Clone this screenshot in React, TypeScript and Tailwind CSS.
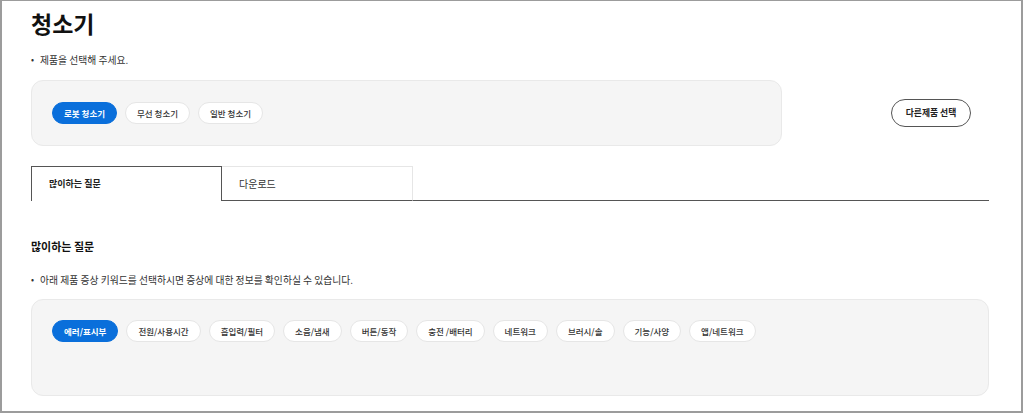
import React from "react";

const products = ["로봇 청소기", "무선 청소기", "일반 청소기"];
const keywords = [
  "에러/표시부",
  "전원/사용시간",
  "흡입력/필터",
  "소음/냄새",
  "버튼/동작",
  "충전 /배터리",
  "네트워크",
  "브러시/솔",
  "기능/사양",
  "앱/네트워크",
];

function Chip({ label, active }: { label: string; active?: boolean }) {
  return (
    <button
      className={
        active
          ? "h-[22px] px-[11px] rounded-full bg-[#0a6fdb] border border-[#0a6fdb] text-white text-[8.5px] font-bold leading-none whitespace-nowrap"
          : "h-[22px] px-[11px] rounded-full bg-white border border-[#e6e6e6] text-[#333] text-[8.5px] font-medium leading-none whitespace-nowrap"
      }
    >
      {label}
    </button>
  );
}

function Bullet({ children }: { children: React.ReactNode }) {
  return (
    <p className="flex items-center leading-[14px] text-[#333] text-[9.8px]">
      <span className="w-[9px] text-[9px]">•</span>
      <span>{children}</span>
    </p>
  );
}

export default function App() {
  return (
    <div
      className="w-[1023px] h-[413px] bg-white border-2 border-t border-[#9c9c9c] overflow-hidden"
      style={{ fontFamily: "'Noto Sans CJK KR', 'Noto Sans', sans-serif" }}
    >
      <div className="pt-[6px] pl-[29px] pr-[32px]">
        <h1 className="text-[23px] leading-[32px] font-bold text-[#111]">청소기</h1>

        <div className="mt-[14px]">
          <Bullet>제품을 선택해 주세요.</Bullet>
        </div>

        {/* product picker */}
        <div className="mt-[13px] flex items-center">
          <div className="w-[751px] h-[66px] rounded-[12px] bg-[#f5f5f5] border border-[#e9e9e9] flex items-center gap-[8px] px-[20px]">
            {products.map((p, i) => (
              <Chip key={p} label={p} active={i === 0} />
            ))}
          </div>
          <button className="ml-auto mr-[18px] h-[28px] w-[80px] rounded-full border border-[#555] bg-white text-[8.8px] font-bold text-[#222] leading-none">
            다른제품 선택
          </button>
        </div>

        {/* tabs */}
        <div className="mt-[20px] flex h-[35px]">
          <div className="w-[191px] h-[35px] border-t border-l border-r border-[#555] flex items-center pl-[17px] text-[9px] font-bold text-[#222]">
            많이하는 질문
          </div>
          <div className="w-[191px] h-[35px] border-t border-r border-t-[#e6e6e6] border-r-[#e6e6e6] border-b border-b-[#555] flex items-center pl-[17px] text-[10px] text-[#333]">
            다운로드
          </div>
          <div className="flex-1 border-b border-[#555]" />
        </div>

        <h2 className="mt-[37px] text-[11px] leading-[16px] font-bold text-[#111]">많이하는 질문</h2>

        <div className="mt-[19px]">
          <Bullet>
            아래 제품 증상 키워드를 선택하시면 증상에 대한 정보를 확인하실 수 있습니다.
          </Bullet>
        </div>

        {/* symptom keywords */}
        <div className="mt-[12px] h-[97px] rounded-[12px] bg-[#f5f5f5] border border-[#e9e9e9] pt-[20px] px-[20px] flex items-start gap-[8px]">
          {keywords.map((k, i) => (
            <Chip key={k} label={k} active={i === 0} />
          ))}
        </div>
      </div>
    </div>
  );
}
